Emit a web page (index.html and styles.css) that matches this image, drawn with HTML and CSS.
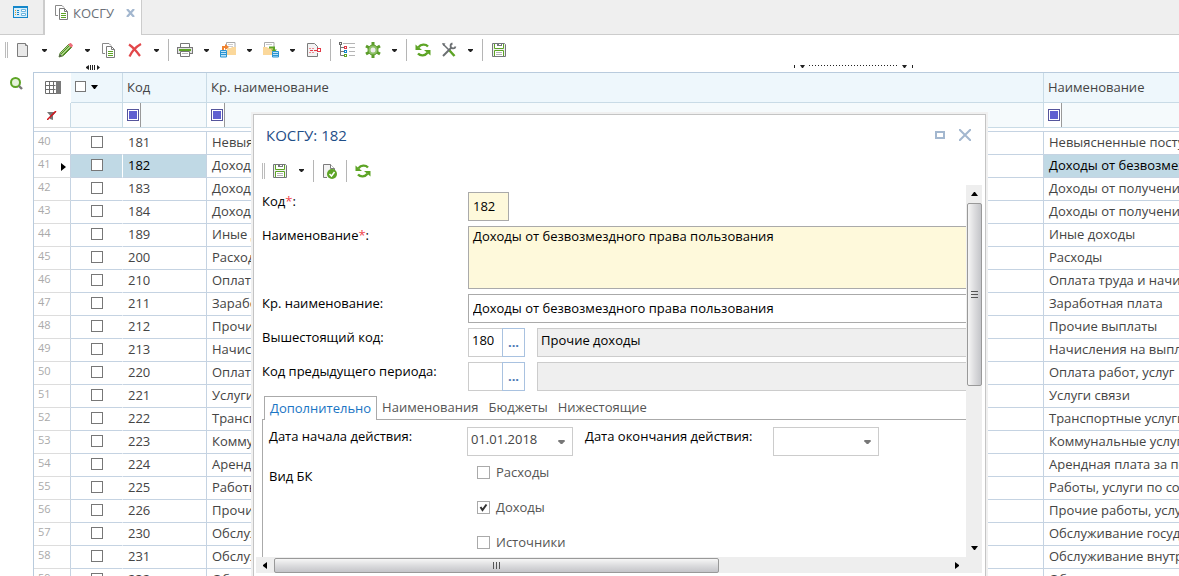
FILE: index.html
```html
<!DOCTYPE html>
<html lang="ru">
<head>
    <meta charset="UTF-8">
    <meta name="viewport" content="width=device-width, initial-scale=1.0">
    <title>КОСГУ</title>
    <link rel="stylesheet" href="styles.css">
</head>
<body>

    <!-- shared icons -->
    <svg class="sprite" aria-hidden="true">
        <symbol id="i-copy" viewBox="0 0 16 16">
            <path d="M4 11.5H1.5V1.5H8L10 3.5" fill="none" stroke="#8a8a8a"/>
            <path d="M5.5 4.5h5l3 3v8h-8z" fill="#fff" stroke="#7c7c7c"/>
            <path d="M10.5 4.5v3h3" fill="none" stroke="#7c7c7c"/>
            <path d="M7 9.5h5M7 11.5h5M7 13.5h5" stroke="#5da425"/>
        </symbol>
        <symbol id="i-save" viewBox="0 0 16 16">
            <path d="M1.5 1.5h12l1 1v12h-13z" fill="#f0f0f0" stroke="#75787b"/>
            <path d="M3.500 2v4.500h9V2" fill="#fff" stroke="#5da425"/>
            <path d="M6 1h5v3H6z" fill="#75787b"/>
            <path d="M8 2h2v1H8z" fill="#fff"/>
            <path d="M3.500 14V8.500h9V14" fill="#fff" stroke="#5da425"/>
            <path d="M5 10.500h6M5 12.500h6" stroke="#b5b5b5"/>
        </symbol>
        <symbol id="i-refresh" viewBox="0 0 16 16">
            <path d="M13 4.500C10.500 1.800 6 2 3.500 5.200" fill="none" stroke="#5da425" stroke-width="2.400"/>
            <path d="M.5 2.500V8H7z" fill="#5da425"/>
            <path d="M3 11.500c2.500 2.700 7 2.500 9.500-.7" fill="none" stroke="#5da425" stroke-width="2.400"/>
            <path d="M15.500 13.500V8H9z" fill="#5da425"/>
        </symbol>
        <symbol id="i-arrow" viewBox="0 0 5 3"><path d="M0 0h5v1L3 3H2L0 1z" fill="currentColor"/></symbol>
    </svg>

    <nav class="tabs">
        <a href="#home" class="tab home" aria-label="Главная">
            <svg width="16" height="14" viewBox="0 0 16 14">
                <rect x=".5" y="1.500" width="14" height="11" fill="#d9effb" stroke="#1487ca"/>
                <path d="M0 1h15v2H0z" fill="#1487ca"/>
                <path d="M2 5.500h1M2 7.500h1M2 9.500h1" stroke="#e0a12c"/>
                <path d="M4 5.500h2M4 7.500h2M4 9.500h2" stroke="#1487ca"/>
                <path d="M8.500 4.500h4v2h-4zM8.500 8.500h4v2h-4z" fill="#fff" stroke="#6bb5e0"/>
            </svg>
        </a>
        <div class="tab current">
            <svg width="16" height="16"><use href="#i-copy"/></svg>
            <a href="#kosgu">КОСГУ</a>
            <button class="tabClose" aria-label="Закрыть вкладку">
                <svg width="9" height="8" viewBox="0 0 9 8"><path d="M1 0l7 8M8 0L1 8" stroke="#a3b7cf" stroke-width="2.200"/></svg>
            </button>
        </div>
    </nav>

    <div class="toolbar">
        <span class="grip"></span>
        <button class="tool" aria-label="Создать"><svg width="16" height="16" viewBox="0 0 16 16"><path d="M2.500 1.500h8l2 2v11h-10z" fill="#e9e9e9" stroke="#7c7c7c"/><path d="M10.500 1.500v2h2" fill="#fff" stroke="#7c7c7c"/></svg></button>
        <button class="drop" aria-label="Ещё"><svg width="5" height="3"><use href="#i-arrow"/></svg></button>
        <button class="tool" aria-label="Изменить"><svg width="16" height="16" viewBox="0 0 16 16"><path d="M1 15l1.200-4.200L11 2l3 3-8.800 8.800z" fill="#a9d287" stroke="#5b8a35"/><path d="M3 12l9-9M4.500 13.500l9-9" stroke="#4f8f20"/><path d="M1 15l.9-3 2.100 2.100z" fill="#555"/><path d="M10.300 2.700L12 1c.6-.5 3.400 2 2.900 2.900l-1.700 1.800z" fill="#ee6f7c"/></svg></button>
        <button class="drop" aria-label="Ещё"><svg width="5" height="3"><use href="#i-arrow"/></svg></button>
        <button class="tool" aria-label="Копировать"><svg width="16" height="16"><use href="#i-copy"/></svg></button>
        <button class="tool" aria-label="Удалить"><svg width="16" height="16" viewBox="0 0 16 16"><path d="M2 2.500c3 2 7 6 11 11.500M14 2C9.500 4.500 5 9 2.500 14.500" fill="none" stroke="#e2474a" stroke-width="2.200"/></svg></button>
        <button class="drop" aria-label="Ещё"><svg width="5" height="3"><use href="#i-arrow"/></svg></button>
        <span class="sep"></span>
        <button class="tool" aria-label="Печать"><svg width="16" height="16" viewBox="0 0 16 16"><path d="M3.500 6V1.500h9V6" fill="#fff" stroke="#777"/><rect x=".5" y="5.500" width="15" height="6" fill="#e2e2e2" stroke="#777"/><path d="M2 8h12" stroke="#5da425" stroke-width="2"/><path d="M3.500 9.500h9v5h-9z" fill="#fff" stroke="#777"/><path d="M5 11.500h6" stroke="#b5b5b5"/></svg></button>
        <button class="drop" aria-label="Ещё"><svg width="5" height="3"><use href="#i-arrow"/></svg></button>
        <button class="tool" aria-label="Импорт"><svg width="16" height="16" viewBox="0 0 16 16"><path d="M6.500 7V.5H15V7" fill="#fff" stroke="#aaa"/><path d="M8 2.500h5M8 4.500h5" stroke="#ccc"/><path d="M7 6h4l1-1h4v8H7z" fill="#fbd89b"/><path d="M3 8V5h3" fill="none" stroke="#f08330" stroke-width="2"/><path d="M5 2l4 3-4 3z" fill="#f08330"/><path d="M.5 8.500h6v6.500h-6z" fill="#bfe3f7" stroke="#2b94d2"/><path d="M.5 10.500h6M.5 12.500h6" stroke="#2b94d2"/></svg></button>
        <button class="drop" aria-label="Ещё"><svg width="5" height="3"><use href="#i-arrow"/></svg></button>
        <button class="tool" aria-label="Экспорт"><svg width="16" height="16" viewBox="0 0 16 16"><path d="M1.500 6V.5H11V6" fill="#fff" stroke="#aaa"/><path d="M3 2.500h6" stroke="#ccc"/><path d="M0 5h4l1 1h5v7H0z" fill="#fbd89b"/><path d="M6 5.500h5V8" fill="none" stroke="#5da425" stroke-width="2"/><path d="M8 7.500h6l-3 3z" fill="#5da425"/><path d="M9.500 9.500h6v5.500h-6z" fill="#bfe3f7" stroke="#2b94d2"/><path d="M9.500 11.500h6M9.500 13.500h6" stroke="#2b94d2"/></svg></button>
        <button class="drop" aria-label="Ещё"><svg width="5" height="3"><use href="#i-arrow"/></svg></button>
        <button class="tool" aria-label="Исключить"><svg width="16" height="16" viewBox="0 0 16 16"><path d="M11.500 11v3.500h-10v-13h7l3 3V6" fill="#f3f3f3" stroke="#7c7c7c"/><path d="M3 6.500h6M3 10.500h6" stroke="#ee8b93" stroke-dasharray="2 1"/><path d="M4 8.500h7" stroke="#e23a48" stroke-dasharray="3 1"/><rect x="11.500" y="6.500" width="3" height="3" fill="#fff" stroke="#e23a48"/></svg></button>
        <span class="sep"></span>
        <button class="tool" aria-label="Дерево"><svg width="16" height="16" viewBox="0 0 16 16"><path d="M1.500 3v10.500M1.500 5.500H5M1.500 9.500H5M1.500 13.500H5" fill="none" stroke="#777"/><path d="M4 1.500h12M10 5.500h6M10 9.500h6M10 13.500h6" stroke="#b5b5b5"/><rect x=".5" y=".5" width="2" height="2" fill="#fff" stroke="#666"/><rect x="5.500" y="4.500" width="2" height="2" fill="#fff" stroke="#e23a48"/><rect x="5.500" y="8.500" width="2" height="2" fill="#fff" stroke="#1487ca"/><rect x="5.500" y="12.500" width="2" height="2" fill="#fff" stroke="#5da425"/></svg></button>
        <button class="tool" aria-label="Настройки"><svg width="16" height="16" viewBox="0 0 16 16"><path d="M8 0v16M1 4l14 8M15 4L1 12" stroke="#5b9c29" stroke-width="3"/><circle cx="8" cy="8" r="5" fill="#8fc169" stroke="#5b9c29"/><circle cx="8" cy="8" r="2.500" fill="#eee"/></svg></button>
        <button class="drop" aria-label="Ещё"><svg width="5" height="3"><use href="#i-arrow"/></svg></button>
        <span class="sep"></span>
        <button class="tool" aria-label="Обновить"><svg width="16" height="16"><use href="#i-refresh"/></svg></button>
        <button class="tool" aria-label="Сервис"><svg width="16" height="16" viewBox="0 0 16 16"><path d="M2 2l7 7" stroke="#6b6f72" stroke-width="1.500"/><path d="M1 1l3.500.5-2 2.500z" fill="#6b6f72"/><path d="M8.500 8.500l5 5.500" stroke="#5da425" stroke-width="2.500"/><path d="M2 14l8.500-8.500" stroke="#6b6f72" stroke-width="2"/><path d="M11.500 1.500a2.500 2.500 0 1 0 3 3" fill="none" stroke="#6b6f72" stroke-width="1.800"/></svg></button>
        <button class="drop" aria-label="Ещё"><svg width="5" height="3"><use href="#i-arrow"/></svg></button>
        <span class="sep"></span>
        <button class="tool" aria-label="Сохранить"><svg width="16" height="16"><use href="#i-save"/></svg></button>
    </div>

    <!-- splitter handles -->
    <div class="splitters">
        <svg width="14" height="5" viewBox="0 0 14 5"><path d="M3 0v5L0 3V2zM11 0v5l3-2.500z" fill="#222"/><path d="M4.500 0v5M6.500 0v5M8.500 0v5" stroke="#222"/></svg>
        <svg width="119" height="5" viewBox="0 0 119 5"><path d="M.5 0v3M118.500 0v3" stroke="#222"/><path d="M6 0h5L9 3H8zM108 0h5l-2 3h-1z" fill="#222"/><path d="M15 .5h89" stroke="#222" stroke-dasharray="1 2"/></svg>
    </div>

    <main>
        <aside>
            <button class="search" aria-label="Поиск">
                <svg width="13" height="13" viewBox="0 0 13 13"><circle cx="5.500" cy="5.500" r="4.500" fill="#e6f2dc" stroke="#5da425" stroke-width="2"/><path d="M9 9l3 3" stroke="#777" stroke-width="2.400"/></svg>
            </button>
        </aside>

        <table class="grid">
            <colgroup><col class="cNum"><col class="cCheck"><col class="cCode"><col><col class="cName"></colgroup>
            <thead>
                <tr class="titles">
                    <th class="corner"><svg width="16" height="14" viewBox="0 0 16 14"><path d="M.5.5h15v12H.5zM.5 4.500h10M.5 8.500h10M4.500.5v12M8.500.5v12" fill="#fff" stroke="#6d6d6d"/><path d="M11 0h5v13h-5z" fill="#7a7a7a"/></svg></th>
                    <th class="all"><div><input type="checkbox" aria-label="Выбрать все"><svg width="7" height="4" viewBox="0 0 7 4"><path d="M0 0h7L4 4H3z"/></svg></div></th>
                    <th>Код</th>
                    <th>Кр. наименование</th>
                    <th>Наименование</th>
                </tr>
                <tr class="filters">
                    <th class="corner"><svg width="10" height="9" viewBox="0 0 10 9"><path d="M0 1h9L6 4.500V9L3 8V4.500z" fill="#777"/><path d="M0 9l9-9" stroke="#d3141c" stroke-width="1.500"/></svg></th>
                    <th></th>
                    <th><div class="filter"><button aria-label="Условие"></button><input type="text" aria-label="Фильтр по коду"></div></th>
                    <th><div class="filter"><button aria-label="Условие"></button><input type="text" aria-label="Фильтр по кр. наименованию"></div></th>
                    <th><div class="filter"><button aria-label="Условие"></button><input type="text" aria-label="Фильтр по наименованию"></div></th>
                </tr>
                <tr class="gap"><td colspan="5"></td></tr>
            </thead>
            <tbody class="rows"></tbody>
        </table>
    </main>

    <section class="dialog" role="dialog" aria-labelledby="dlgTitle">
        <header>
            <h2 id="dlgTitle">КОСГУ: 182</h2>
            <button aria-label="Развернуть"><svg width="10" height="8" viewBox="0 0 10 8"><rect x="1" y="1" width="8" height="6" fill="none" stroke="#a3b7cf" stroke-width="2"/></svg></button>
            <button aria-label="Закрыть"><svg width="12" height="12" viewBox="0 0 12 12"><path d="M0 0l12 12M12 0L0 12" stroke="#a3b7cf" stroke-width="2"/></svg></button>
        </header>

        <div class="toolbar">
            <span class="grip"></span>
            <button class="tool" aria-label="Сохранить"><svg width="16" height="16"><use href="#i-save"/></svg></button>
            <button class="drop" aria-label="Ещё"><svg width="5" height="3"><use href="#i-arrow"/></svg></button>
            <span class="sep"></span>
            <button class="tool" aria-label="Проверить"><svg width="16" height="16" viewBox="0 0 16 16"><path d="M5 14.500H1.500v-13h7l4 4V7" fill="#f3f3f3" stroke="#7c7c7c"/><path d="M8.500 1.500v4h4" fill="#fff" stroke="#7c7c7c"/><circle cx="10" cy="11" r="5" fill="#5da425"/><path d="M7.500 11l2 2 3-4" fill="none" stroke="#fff" stroke-width="1.500"/></svg></button>
            <span class="sep"></span>
            <button class="tool" aria-label="Обновить"><svg width="16" height="16"><use href="#i-refresh"/></svg></button>
        </div>

        <div class="scroller">
            <form class="form">
                <div class="field">
                    <label for="code">Код<i>*</i>:</label>
                    <input id="code" class="need short" type="text" value="182">
                </div>
                <div class="field">
                    <label for="name">Наименование<i>*</i>:</label>
                    <textarea id="name" class="need">Доходы от безвозмездного права пользования</textarea>
                </div>
                <div class="field">
                    <label for="shortName">Кр. наименование:</label>
                    <input id="shortName" type="text" value="Доходы от безвозмездного права пользования">
                </div>
                <div class="field">
                    <label for="parent">Вышестоящий код:</label>
                    <div class="lookup">
                        <input id="parent" type="text" value="180"><button type="button" aria-label="Выбрать код">...</button>
                    </div>
                    <input class="readonly" type="text" value="Прочие доходы" aria-label="Наименование вышестоящего кода" readonly>
                </div>
                <div class="field">
                    <label for="prev">Код предыдущего периода:</label>
                    <div class="lookup">
                        <input id="prev" type="text"><button type="button" aria-label="Выбрать код">...</button>
                    </div>
                    <input class="readonly" type="text" aria-label="Наименование кода предыдущего периода" readonly>
                </div>

                <div class="formTabs">
                    <button type="button" class="on">Дополнительно</button>
                    <button type="button">Наименования</button>
                    <button type="button">Бюджеты</button>
                    <button type="button">Нижестоящие</button>
                </div>
                <div class="panel">
                    <div class="dates">
                        <label for="from">Дата начала действия:</label>
                        <div class="date"><input id="from" type="text" value="01.01.2018"><button type="button" aria-label="Календарь"><svg width="7" height="4" viewBox="0 0 5 3"><use href="#i-arrow"/></svg></button></div>
                        <label for="to">Дата окончания действия:</label>
                        <div class="date"><input id="to" type="text"><button type="button" aria-label="Календарь"><svg width="7" height="4" viewBox="0 0 5 3"><use href="#i-arrow"/></svg></button></div>
                    </div>
                    <div class="kinds">
                        <span>Вид БК</span>
                        <div>
                            <label><input type="checkbox">Расходы</label>
                            <label><input type="checkbox" checked>Доходы</label>
                            <label><input type="checkbox">Источники</label>
                        </div>
                    </div>
                </div>
            </form>

            <div class="vbar">
                <svg width="7" height="4" viewBox="0 0 7 4"><path d="M0 4h7L4 0H3z"/></svg>
                <div class="thumb"><span></span></div>
                <svg width="7" height="4" viewBox="0 0 7 4"><path d="M0 0h7L4 4H3z"/></svg>
            </div>
            <div class="hbar">
                <svg width="4" height="7" viewBox="0 0 4 7"><path d="M4 0v7L0 4V3z"/></svg>
                <div class="thumb"><span></span></div>
                <svg width="4" height="7" viewBox="0 0 4 7"><path d="M0 0v7l4-3V3z"/></svg>
            </div>
        </div>
    </section>

    <script>
        let rows = [
            ["181", "Невыясненные поступления"],
            ["182", "Доходы от безвозмездного права пользования"],
            ["183", "Доходы от получения субсидии на иные цели"],
            ["184", "Доходы от получения субсидии на капитальные вложения"],
            ["189", "Иные доходы"],
            ["200", "Расходы"],
            ["210", "Оплата труда и начисления на выплаты по оплате труда"],
            ["211", "Заработная плата"],
            ["212", "Прочие выплаты"],
            ["213", "Начисления на выплаты по оплате труда"],
            ["220", "Оплата работ, услуг"],
            ["221", "Услуги связи"],
            ["222", "Транспортные услуги"],
            ["223", "Коммунальные услуги"],
            ["224", "Арендная плата за пользование имуществом"],
            ["225", "Работы, услуги по содержанию имущества"],
            ["226", "Прочие работы, услуги"],
            ["230", "Обслуживание государственного долга"],
            ["231", "Обслуживание внутреннего долга"],
            ["232", "Обслуживание внешнего долга"],
        ];

        const tbody = document.querySelector(".rows");

        rows.forEach(([code, name], key) => {
            let tr = document.createElement("tr");
            if (code == "182") {
                tr.classList.add("selected");
            }
            tr.innerHTML = `
                <td class="num">${key + 40}</td>
                <td class="check"><input type="checkbox" aria-label="Выбрать ${code}"></td>
                <td class="code">${code}</td>
                <td class="brief">${name}</td>
                <td class="name">${name}</td>
            `;
            tbody.appendChild(tr);
        });
    </script>
</body>
</html>
```
FILE: styles.css
```css
*{
    box-sizing: border-box;
    margin: 0;
    padding: 0;
}
html, body{
    height: 100%;
}
body{
    position: relative;
    display: flex;
    flex-direction: column;
    overflow: hidden;
    background: #fff;
    color: #444;
    font: 13px/18px "Open Sans", "Noto Sans", sans-serif;
}
button, input, textarea{
    font: inherit;
    color: inherit;
    border: none;
    border-radius: 0;
    background: none;
    outline: none;
}
button{
    cursor: pointer;
}
svg{
    display: block;
    flex: none;
}
.sprite{
    position: absolute;
    width: 0;
    height: 0;
}
input[type="checkbox"]{
    appearance: none;
    display: block;
    flex: none;
    width: 13px;
    height: 13px;
    border: 1px solid #777;
    background: #fff;
}
input[type="checkbox"]:checked{
    background: #fff url("data:image/svg+xml,%3Csvg xmlns='http://www.w3.org/2000/svg' viewBox='0 0 11 11'%3E%3Cpath d='M2.500 5l2 3L8.500 2.500' fill='none' stroke='%23333' stroke-width='2'/%3E%3C/svg%3E");
}

/* top tabs */
.tabs{
    display: flex;
    flex: none;
    height: 35px;
    background: #efefef;
    border-bottom: 1px solid #ccc;
}
.tab{
    display: flex;
    height: 35px;
}
.home{
    width: 43px;
    padding: 5px 0 0 13px;
}
.current{
    gap: 3px;
    padding: 4px 6px 0 9px;
    background: #fff;
    border: solid #ccc;
    border-width: 0 1px 0 2px;
}
.current a{
    line-height: 18px;
    font-size: 13px;
    color: #6a6f78;
    text-decoration: none;
}
.tabClose{
    height: 18px;
    margin-left: 9px;
}

/* toolbars */
.toolbar{
    display: flex;
    flex: none;
    align-items: center;
    height: 30px;
    padding-left: 5px;
    color: #222;
}
.grip{
    width: 3px;
    height: 16px;
    margin-right: 2px;
    border: solid #bbb;
    border-width: 0 1px;
}
.tool, .drop{
    display: flex;
    align-items: center;
    justify-content: center;
    width: 26px;
    height: 24px;
}
.drop{
    width: 17px;
}
.sep{
    width: 1px;
    height: 22px;
    margin: 0 3px;
    background: #b5b5b5;
}
.splitters{
    display: flex;
    flex: none;
    justify-content: space-between;
    height: 7px;
    padding: 0 266px 0 86px;
}

/* grid */
main{
    display: flex;
    flex: 1;
    min-height: 0;
}
aside{
    flex: none;
    width: 33px;
    padding: 4px 0 0 10px;
}
.grid{
    flex: 1;
    min-width: 0;
    width: 100%;
    table-layout: fixed;
    border-collapse: separate;
    border-spacing: 0;
    border: solid #b9cbdd;
    border-width: 1px 0 0 1px;
    align-self: flex-start;
}
.cNum{
    width: 37px;
}
.cCheck{
    width: 52px;
}
.cCode{
    width: 84px;
}
.cName{
    width: 135px;
}
.grid th{
    padding: 0 4px 2px;
    border: solid #c9dbe6;
    border-width: 0 1px 1px 0;
    background: #eef7fc;
    font-weight: normal;
    text-align: left;
}
.grid .corner{
    padding: 0;
    background: #fff;
    border-bottom-color: #ddd;
}
.grid th:last-child{
    border-right: none;
}
.corner svg{
    margin: auto;
}
.titles th{
    height: 30px;
}
.titles .corner{
    border: none;
}
.all div{
    display: flex;
    align-items: center;
    gap: 5px;
}
.all input[type="checkbox"]{
    width: 11px;
    height: 11px;
}
.all svg{
    fill: #000;
}
.grid .filters th{
    height: 25px;
    padding: 0;
    background: #f5fafc;
}
.grid .filters .corner{
    background: #fff;
}
.filter{
    display: flex;
    height: 24px;
}
.filter button{
    width: 18px;
    padding: 6px 3px 8px 4px;
    background: #fff;
    border-right: 1px solid #999;
}
.filter button::before{
    content: "";
    display: block;
    width: 10px;
    height: 10px;
    border: 1px solid #55559c;
    background: #5f5fd0;
    box-shadow: inset 0 0 0 1px #fff;
}
.filter input{
    flex: 1;
    min-width: 0;
}
.gap td{
    height: 4px;
    border-bottom: 1px solid #c5d3e2;
}
.rows td{
    height: 23px;
    padding: 0 5px 2px;
    border-bottom: 1px solid #c5d3e2;
    line-height: 20px;
    white-space: nowrap;
    overflow: hidden;
}
.rows .num{
    padding: 0 4px;
    border-right: 1px solid #c5d3e2;
    border-bottom-color: #ddd;
    color: #aaa;
    font-size: 11px;
    line-height: 18px;
    vertical-align: top;
}
.rows .check{
    border-right: 1px solid #fff;
}
.check input[type="checkbox"]{
    width: 12px;
    height: 12px;
    margin: auto;
}
.rows .code, .rows .brief{
    border-right: 1px solid #c5d3e2;
}
.selected .num{
    background: url("data:image/svg+xml,%3Csvg xmlns='http://www.w3.org/2000/svg' width='5' height='8'%3E%3Cpath d='M0 0v8l5-4z'/%3E%3C/svg%3E") no-repeat 27px 8px;
}
.selected .check, .selected .code, .selected .name{
    background: #c0d9e5;
    color: #000;
}

/* record window */
.dialog{
    position: absolute;
    top: 114px;
    left: 253px;
    right: 193px;
    bottom: -2px;
    display: flex;
    flex-direction: column;
    padding: 0 3px 4px 2px;
    border: 1px solid #c4c4c4;
    background: #fff;
    box-shadow: 0 0 0 2px #f0f0f0;
    color: #000;
}
.dialog header{
    display: flex;
    align-items: center;
    gap: 14px;
    height: 40px;
    padding: 0 11px 0 10px;
}
.dialog h2{
    flex: 1;
    color: #1f4e87;
    font-size: 15px;
    font-weight: normal;
}
.dialog .toolbar{
    padding: 1px 0 0 6px;
}
.scroller{
    display: grid;
    grid-template-columns: 1fr 16px;
    grid-template-rows: 1fr 16px;
    flex: 1;
    min-height: 0;
    background: #eee;
}
.form{
    overflow: hidden;
    padding: 7px 0 0 6px;
    background: #fff;
}
.field{
    display: flex;
    margin-bottom: 5px;
}
.field > label{
    flex: none;
    width: 206px;
}
.field i{
    color: #f0444c;
    font-style: normal;
}
.field input, .field textarea{
    flex: 1;
    min-width: 0;
    height: 29px;
    padding: 0 4px 2px;
    border: 1px solid #aaa;
    border-right: none;
}
.field textarea{
    display: block;
    height: 63px;
    resize: none;
}
.field .need{
    background: #fef9db;
}
.field .short{
    flex: none;
    width: 41px;
    border-right: 1px solid #aaa;
}
.lookup{
    display: flex;
    width: 57px;
    margin-right: 12px;
}
.field .lookup input{
    padding: 0 3px 6px;
    border-color: #ccc;
}
.lookup button{
    width: 23px;
    padding-bottom: 2px;
    border: 1px solid #a9c2e0;
    color: #4a78b5;
    font-weight: bold;
}
.field .readonly{
    padding: 0 3px 6px;
    border-color: #ccc;
    background: #efefef;
}
.formTabs{
    display: flex;
    padding-left: 2px;
}
.formTabs button{
    height: 23px;
    padding: 0 5px 2px;
    color: #555;
}
.formTabs .on{
    position: relative;
    height: 24px;
    margin-bottom: -1px;
    border: 1px solid #aaa;
    border-bottom: none;
    background: #fff;
    color: #1a75c4;
}
.panel{
    height: 300px;
    padding: 7px 0 0 6px;
    border: solid #aaa;
    border-width: 1px 0 0 1px;
}
.dates, .kinds{
    display: flex;
}
.dates label, .kinds > span{
    flex: none;
    width: 198px;
}
.dates .date + label{
    width: 188px;
}
.date{
    display: flex;
    width: 106px;
    height: 29px;
    margin-right: 12px;
    border: 1px solid #ccc;
    color: #444;
}
.date input{
    flex: 1;
    min-width: 0;
    padding: 0 3px 6px;
}
.date button{
    width: 22px;
    padding-left: 8px;
    color: #777;
}
.kinds{
    padding-top: 6px;
}
.kinds div{
    display: flex;
    flex-direction: column;
    gap: 15px;
    padding-left: 10px;
}
.kinds > span{
    padding-top: 5px;
}
.kinds label{
    display: flex;
    align-items: center;
    gap: 6px;
    height: 20px;
    color: #555;
}
.kinds label input[type="checkbox"]{
    border-color: #aaa;
}

/* scrollbars */
.vbar, .hbar{
    display: flex;
    align-items: center;
    justify-content: space-between;
    background: #eee;
}
.vbar{
    flex-direction: column;
    padding: 7px 0;
}
.hbar{
    padding: 0 7px;
}
.thumb{
    display: flex;
    align-items: center;
    justify-content: center;
    border: 1px solid #999;
    border-radius: 2px;
}
.vbar .thumb{
    width: 15px;
    height: 51%;
    margin: 7px 0 auto;
    background: linear-gradient(to right, #f6f6f6, #dcdcde 50%, #c4c5c9);
}
.hbar .thumb{
    width: 64%;
    height: 15px;
    margin: 0 auto 0 7px;
    background: linear-gradient(#f6f6f6, #dcdcde 50%, #c4c5c9);
}
.thumb span{
    width: 7px;
    height: 7px;
    background: repeating-linear-gradient(#555 0 1px, transparent 1px 3px);
}
.hbar .thumb span{
    background: repeating-linear-gradient(to right, #555 0 1px, transparent 1px 3px);
}
```
